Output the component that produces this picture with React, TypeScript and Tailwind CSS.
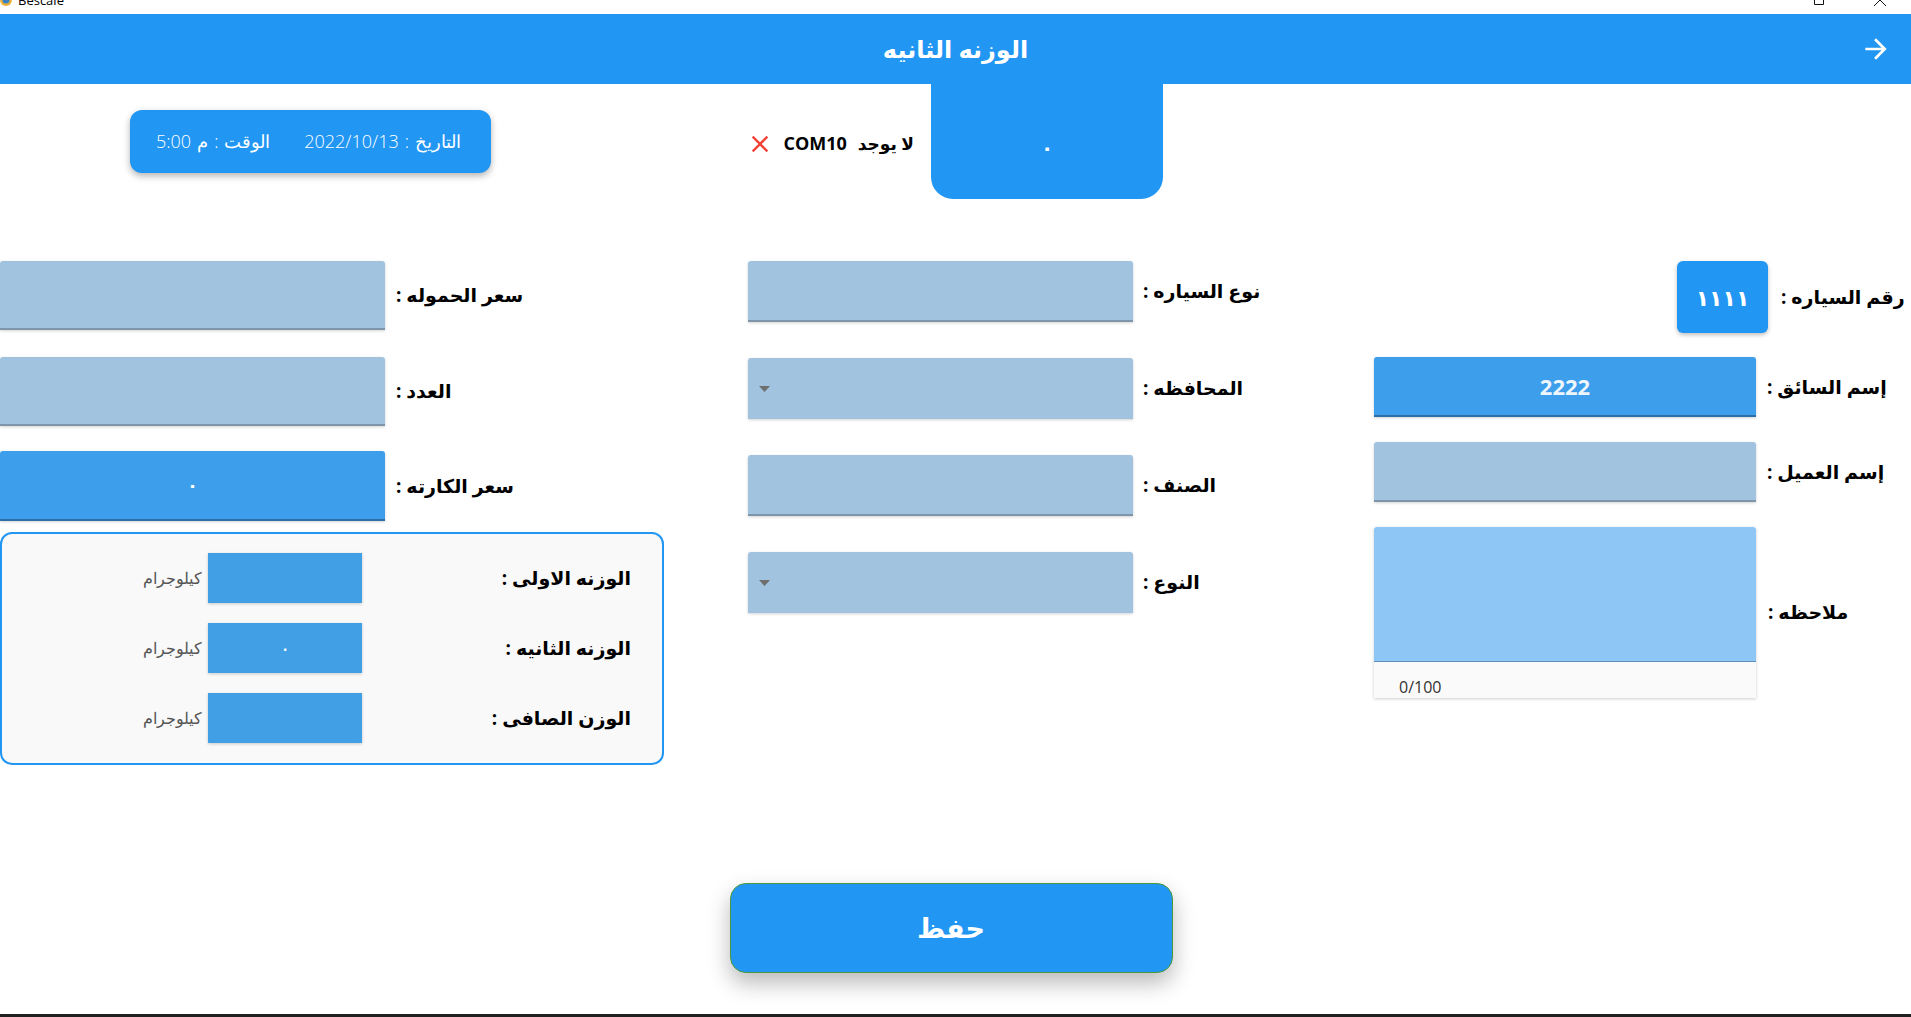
import type { ReactNode } from "react";

type Tone = "light" | "blue";

const Label = ({ children, className = "" }: { children: ReactNode; className?: string }) => (
    <span dir="rtl" className={`whitespace-nowrap text-[19px] font-bold text-black ${className}`}>
        {children}
    </span>
);

const DropArrow = () => (
    <svg width="11" height="6" viewBox="0 0 11 6">
        <path d="M0 0h11L5.5 6z" fill="#6f6f6f" />
    </svg>
);

const Field = ({
    tone = "light",
    line = true,
    drop = false,
    className = "",
    children,
}: {
    tone?: Tone;
    line?: boolean;
    drop?: boolean;
    className?: string;
    children?: ReactNode;
}) => {
    const bg = tone === "blue" ? "bg-[#3d9eec]" : "bg-[#a1c3df]";
    const border = !line ? "" : tone === "blue" ? "border-b-2 border-[#2c6ea8]" : "border-b-2 border-[#7f96aa]";
    return (
        <div
            className={`flex shrink-0 items-center rounded-t-[3px] shadow-[0_1px_3px_rgba(0,0,0,0.18)] ${drop ? "justify-start pl-[11px]" : "justify-center"} ${bg} ${border} ${className}`}
        >
            {drop ? <DropArrow /> : children}
        </div>
    );
};

const WeightRow = ({ label, value }: { label: string; value?: string }) => (
    <div className="flex items-center h-[50px]">
        <span dir="rtl" className="w-[200px] text-right text-[16px] font-light text-[#555]">
            كيلوجرام
        </span>
        <div className="ml-[6px] flex h-[50px] w-[154px] items-center justify-center bg-[#419fe6] shadow-[0_1px_3px_rgba(0,0,0,0.2)] text-white text-[20px]">
            {value}
        </div>
        <div className="w-[269px] text-right">
            <Label>{label}</Label>
        </div>
    </div>
);

const App = () => {
    return (
        <div className="flex h-[1017px] w-[1911px] flex-col overflow-hidden bg-white font-['Open_Sans','DejaVu_Sans',sans-serif]">
            {/* window title strip (cut off) */}
            <div className="flex h-[14px] shrink-0 items-start overflow-hidden">
                <svg width="13" height="14" viewBox="0 0 13 14" className="-mt-[6px]">
                    <circle cx="6" cy="6" r="6" fill="#e8b33a" />
                    <circle cx="6" cy="6" r="3.5" fill="#3b7fc4" />
                </svg>
                <span className="-mt-[10px] ml-[5px] text-[13px] leading-[20px] text-black">Bescale</span>
                <div className="flex-1" />
                <svg width="14" height="6" viewBox="0 0 14 6" className="mr-[47px]">
                    <path d="M2.5 0v4.5h9V0M4.5 0v-1" stroke="#111" strokeWidth="1" fill="none" />
                </svg>
                <svg width="14" height="6" viewBox="0 0 14 6" className="mr-[24px]">
                    <path d="M1 6L7 0L13 6" stroke="#111" strokeWidth="1" fill="none" />
                </svg>
            </div>

            {/* app bar */}
            <div className="flex h-[70px] shrink-0 items-center bg-[#2196f3]">
                <div className="w-[51px]" />
                <div dir="rtl" className="flex-1 text-center text-[24px] font-bold text-white">
                    الوزنه الثانيه
                </div>
                <svg width="32" height="32" viewBox="0 0 24 24" className="mr-[19px]">
                    <path d="M12 4l-1.41 1.41L16.17 11H4v2h12.17l-5.58 5.59L12 20l8-8z" fill="#fff" />
                </svg>
            </div>

            {/* status area */}
            <div className="flex h-[115px] shrink-0 items-start">
                <div className="ml-[130px] mt-[26px] flex h-[63px] w-[361px] items-center justify-between rounded-[12px] bg-[#2196f3] pl-[26px] pr-[30px] text-[18px] font-light text-white shadow-[0_3px_7px_rgba(0,0,0,0.3)]">
                    <div className="flex items-center gap-[6px]">
                        <span>5:00</span>
                        <span>م</span>
                        <span>:</span>
                        <span>الوقت</span>
                    </div>
                    <div className="flex items-center gap-[6px]">
                        <span>2022/10/13</span>
                        <span>:</span>
                        <span>التاريخ</span>
                    </div>
                </div>
                <div className="flex h-[115px] flex-1 items-center justify-end pr-[17px] pt-[4px]">
                    <svg width="28" height="28" viewBox="0 0 24 24">
                        <path
                            d="M19 6.41L17.59 5 12 10.59 6.41 5 5 6.41 10.59 12 5 17.59 6.41 19 12 13.41 17.59 19 19 17.59 13.41 12z"
                            fill="#f44336"
                        />
                    </svg>
                    <span className="ml-[9px] text-[18px] font-bold text-black">COM10</span>
                    <span dir="rtl" className="ml-[11px] text-[17px] font-bold text-black">
                        لا يوجد
                    </span>
                </div>
                <div className="flex h-[115px] w-[232px] items-center justify-center rounded-b-[22px] bg-[#2196f3] pt-[12px] text-[20px] font-bold text-white">
                    ٠
                </div>
                <div className="w-[748px]" />
            </div>

            {/* form */}
            <div className="mt-[62px] flex shrink-0 items-start">
                {/* left column */}
                <div className="flex w-[748px] flex-col">
                    <div className="flex items-center">
                        <Field className="h-[69px] w-[385px]" />
                        <Label className="ml-[11px]">سعر الحموله :</Label>
                    </div>
                    <div className="mt-[27px] flex items-center">
                        <Field className="h-[69px] w-[385px]" />
                        <Label className="ml-[11px]">العدد :</Label>
                    </div>
                    <div className="mt-[25px] flex items-center">
                        <Field tone="blue" className="h-[70px] w-[385px] text-[18px] font-bold text-white">
                            ٠
                        </Field>
                        <Label className="ml-[11px]">سعر الكارته :</Label>
                    </div>
                    <div className="mt-[11px] flex h-[233px] w-[664px] flex-col gap-[20px] rounded-[12px] border-2 border-[#2196f3] bg-[#f9f9f9] pt-[19px]">
                        <WeightRow label="الوزنه الاولى :" />
                        <WeightRow label="الوزنه الثانيه :" value="٠" />
                        <WeightRow label="الوزن الصافى :" />
                    </div>
                </div>

                {/* middle column */}
                <div className="flex w-[626px] flex-col gap-[36px]">
                    <div className="flex items-center">
                        <Field className="h-[61px] w-[385px]" />
                        <Label className="ml-[10px]">نوع السياره :</Label>
                    </div>
                    <div className="flex items-center">
                        <Field drop line={false} className="h-[61px] w-[385px]" />
                        <Label className="ml-[10px]">المحافظه :</Label>
                    </div>
                    <div className="flex items-center">
                        <Field className="h-[61px] w-[385px]" />
                        <Label className="ml-[10px]">الصنف :</Label>
                    </div>
                    <div className="flex items-center">
                        <Field drop line={false} className="h-[61px] w-[385px]" />
                        <Label className="ml-[10px]">النوع :</Label>
                    </div>
                </div>

                {/* right column */}
                <div className="flex flex-1 flex-col">
                    <div className="flex items-center">
                        <div className="ml-[303px] flex h-[72px] w-[91px] items-center justify-center rounded-[6px] bg-[#2196f3] text-[22px] font-bold text-white shadow-[0_2px_4px_rgba(0,0,0,0.25)]">
                            ١١١١
                        </div>
                        <Label className="ml-[13px] text-[18px]">رقم السياره :</Label>
                    </div>
                    <div className="mt-[24px] flex items-center">
                        <Field tone="blue" className="h-[60px] w-[382px] text-[22px] font-bold text-[#eef6fd]">
                            2222
                        </Field>
                        <Label className="ml-[11px]">إسم السائق :</Label>
                    </div>
                    <div className="mt-[25px] flex items-center">
                        <Field className="h-[60px] w-[382px]" />
                        <Label className="ml-[11px]">إسم العميل :</Label>
                    </div>
                    <div className="mt-[25px] flex items-center">
                        <div className="flex w-[382px] flex-col shadow-[0_1px_3px_rgba(0,0,0,0.2)]">
                            <div className="h-[135px] rounded-t-[3px] border-b border-[#5f8fbd] bg-[#8ec7f5]" />
                            <div className="flex h-[36px] items-start bg-[#fafafa] pl-[25px] pt-[15px]">
                                <span className="text-[16px] leading-[20px] text-[#333]">0/100</span>
                            </div>
                        </div>
                        <Label className="ml-[12px]">ملاحظه :</Label>
                    </div>
                </div>
            </div>

            {/* save */}
            <div className="mt-[118px] flex shrink-0 justify-center pr-[9px]">
                <button className="flex h-[90px] w-[443px] items-center justify-center rounded-[16px] border border-[#4c9a3c] bg-[#2196f3] text-[27px] font-bold text-white shadow-[0_10px_22px_rgba(0,0,0,0.28)]">
                    <span dir="rtl">حفظ</span>
                </button>
            </div>

            <div className="flex-1" />
            <div className="h-[3px] shrink-0 bg-[#202020]" />
        </div>
    );
};

export default App;
